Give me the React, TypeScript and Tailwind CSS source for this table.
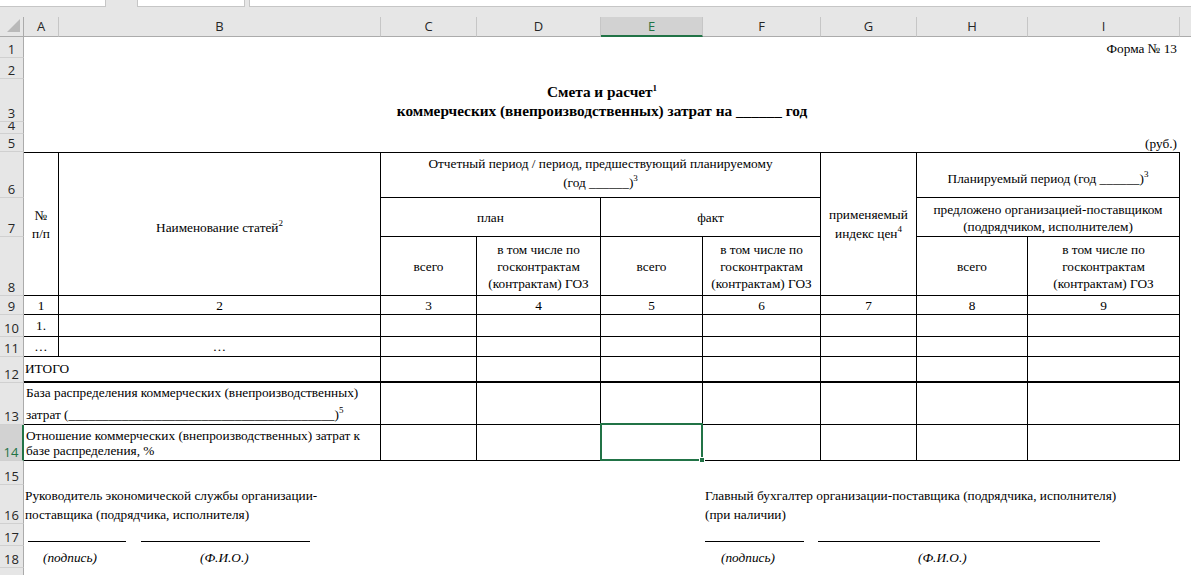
import type { ReactNode } from "react";

const COL = ["", "col-start-1", "col-start-2", "col-start-3", "col-start-4", "col-start-5", "col-start-6", "col-start-7", "col-start-8", "col-start-9", "col-start-10", "col-start-11"];
const ROW = ["", "row-start-1", "row-start-2", "row-start-3", "row-start-4", "row-start-5", "row-start-6", "row-start-7", "row-start-8", "row-start-9", "row-start-10", "row-start-11", "row-start-12", "row-start-13", "row-start-14", "row-start-15", "row-start-16", "row-start-17", "row-start-18", "row-start-19", "row-start-20"];
const CSPAN = ["", "col-span-1", "col-span-2", "col-span-3", "col-span-4", "col-span-5", "col-span-6", "col-span-7", "col-span-8", "col-span-9"];
const RSPAN = ["", "row-span-1", "row-span-2", "row-span-3"];

const LETTERS = ["A", "B", "C", "D", "E", "F", "G", "H", "I"];

type Place = { c: number; r: number; cs?: number; rs?: number; className?: string; children?: ReactNode };

// r is the sheet row (1-based); grid row 1 holds the column letters
function Cell({ c, r, cs = 1, rs = 1, className = "", children }: Place) {
  return (
    <div className={`${COL[c]} ${ROW[r + 1]} ${CSPAN[cs]} ${RSPAN[rs]} ${className}`}>
      {children}
    </div>
  );
}

const Sup = ({ n }: { n: string }) => <sup className="text-[9px] -top-[6px]">{n}</sup>;

const GOZ = (
  <>
    в том числе по
    <br />
    госконтрактам
    <br />
    (контрактам) ГОЗ
  </>
);

type T = { c: number; r: number; cs?: number; rs?: number; node?: ReactNode; align?: string };

const center = "flex flex-col items-center justify-center text-center";

const TABLE: T[] = [
  { c: 2, r: 6, rs: 3, node: <>№<br />п/п</>, align: `${center} leading-[18px] pt-[2px]` },
  { c: 3, r: 6, rs: 3, node: <span>Наименование статей<Sup n="2" /></span>, align: `${center} pt-[6px]` },
  {
    c: 4, r: 6, cs: 4,
    node: <>Отчетный период / период, предшествующий планируемому<br /><span>(год ______)<Sup n="3" /></span></>,
    align: "flex flex-col items-center justify-start text-center leading-[19px] pt-[1px]",
  },
  { c: 8, r: 6, rs: 3, node: <>применяемый<br /><span>индекс цен<Sup n="4" /></span></>, align: `${center} leading-[19px]` },
  { c: 9, r: 6, cs: 2, node: <span>Планируемый период (год ______)<Sup n="3" /></span>, align: "flex flex-col items-center justify-end text-center pb-[10px]" },
  { c: 4, r: 7, cs: 2, node: "план", align: center },
  { c: 6, r: 7, cs: 2, node: "факт", align: center },
  { c: 9, r: 7, cs: 2, node: <>предложено организацией-поставщиком<br />(подрядчиком, исполнителем)</>, align: `${center} leading-[17px] pt-[2px]` },
  { c: 4, r: 8, node: "всего", align: center },
  { c: 5, r: 8, node: GOZ, align: `${center} leading-[17px]` },
  { c: 6, r: 8, node: "всего", align: center },
  { c: 7, r: 8, node: GOZ, align: `${center} leading-[17px]` },
  { c: 9, r: 8, node: "всего", align: center },
  { c: 10, r: 8, node: GOZ, align: `${center} leading-[17px]` },
];

// numbering row 9, data rows 10-11
for (let i = 0; i < 9; i++) TABLE.push({ c: i + 2, r: 9, node: String(i + 1), align: center });
for (let i = 0; i < 9; i++) TABLE.push({ c: i + 2, r: 10, node: i === 0 ? "1." : "", align: center });
for (let i = 0; i < 9; i++) TABLE.push({ c: i + 2, r: 11, node: i < 2 ? "…" : "", align: center });

TABLE.push({ c: 2, r: 12, cs: 2, node: "ИТОГО", align: "flex items-center pl-[1px] pb-[1px]" });
TABLE.push({
  c: 2, r: 13, cs: 2,
  node: (
    <>
      <span>База распределения коммерческих (внепроизводственных)</span>
      <span>затрат (________________________________________)<Sup n="5" /></span>
    </>
  ),
  align: "flex flex-col justify-between pl-[2px] py-[1px]",
});
TABLE.push({
  c: 2, r: 14, cs: 2,
  node: <>Отношение коммерческих (внепроизводственных) затрат к<br />базе распределения, %</>,
  align: "flex flex-col justify-center pl-[2px] leading-[15px] pt-[1px]",
});
for (const r of [12, 13, 14]) for (let c = 4; c <= 10; c++) TABLE.push({ c, r });

export default function App() {
  return (
    <div className="w-[1191px] h-[575px] overflow-hidden bg-white font-[family-name:'Liberation_Serif',serif] text-[13.3px] leading-[17px] text-black">
      {/* formula bar remnants */}
      <div className="h-[17px] bg-[#e6e6e6] flex items-start">
        <div className="w-[106px] h-[7px] bg-white border-r border-b border-[#c6c6c6]" />
        <div className="ml-[31px] w-[108px] h-[7px] bg-white border-x border-b border-[#c6c6c6]" />
        <div className="ml-[4px] flex-1 h-[7px] bg-white border-l border-b border-[#c6c6c6]" />
      </div>

      <div className="grid grid-cols-[24px_35px_322px_96px_124px_102px_118px_96px_111px_152px_1fr] grid-rows-[20px_21px_21px_43px_12px_18px_46px_39px_59px_19px_22px_20px_26px_42px_36px_24px_39px_22px_22px_30px]">
        {/* corner */}
        <div className="col-start-1 row-start-1 bg-[#e6e6e6] border-r border-b border-[#ababab] flex items-end justify-end pr-[2px] pb-[3px]">
          <svg width="14" height="14" viewBox="0 0 14 14">
            <polygon points="13,0 13,13 0,13" fill="#b9b9b9" />
          </svg>
        </div>

        {/* column letters */}
        {LETTERS.map((l, i) => (
          <div
            key={l}
            className={`${COL[i + 2]} row-start-1 flex items-center justify-center font-[family-name:'Open_Sans',sans-serif] text-[13px] border-r border-[#c6c6c6] ${
              l === "E"
                ? "bg-[#d2d2d2] text-[#217346] border-b-2 border-b-[#217346]"
                : "bg-[#e6e6e6] text-[#262626] border-b border-b-[#ababab]"
            }`}
          >
            {l}
          </div>
        ))}
        <div className="col-start-11 row-start-1 bg-[#e6e6e6] border-b border-[#ababab]" />

        {/* row numbers */}
        {Array.from({ length: 19 }, (_, i) => i + 1).map((n) => (
          <div
            key={n}
            className={`col-start-1 ${ROW[n + 1]} flex items-end justify-center font-[family-name:'Open_Sans',sans-serif] text-[13px] leading-[16px] overflow-hidden border-b border-b-[#d0d0d0] ${
              n === 14
                ? "bg-[#d2d2d2] text-[#217346] border-r-2 border-r-[#217346]"
                : "bg-[#e6e6e6] text-[#262626] border-r border-r-[#ababab]"
            }`}
          >
            {n}
          </div>
        ))}

        {/* heading */}
        <Cell c={10} r={1} className="flex items-end justify-end pr-[3px] pb-[1px]">
          Форма № 13
        </Cell>
        <Cell c={2} r={3} cs={9} className="flex flex-col items-center justify-end pb-[2px] font-bold text-[15.3px] leading-[19px]">
          <span>
            Смета и расчет<Sup n="1" />
          </span>
          <span>коммерческих (внепроизводственных) затрат на ______ год</span>
        </Cell>
        <Cell c={10} r={5} className="flex items-end justify-end pr-[3px]">
          (руб.)
        </Cell>

        {/* table */}
        {TABLE.map((t, i) => (
          <Cell
            key={i}
            c={t.c}
            r={t.r}
            cs={t.cs}
            rs={t.rs}
            className={`border-black border-r ${t.r === 12 ? "border-b-2" : "border-b"} ${t.r === 6 ? "border-t" : ""} ${
              t.c === 6 && t.r === 14 ? "relative" : ""
            } ${t.align ?? ""}`}
          >
            {t.node}
            {t.c === 6 && t.r === 14 && (
              <div className="absolute -left-[1px] -right-[1px] -top-[2px] -bottom-[1px] border-2 border-[#217346] z-10">
                <div className="absolute -right-[4px] -bottom-[4px] w-[6px] h-[6px] bg-[#217346] border border-white" />
              </div>
            )}
          </Cell>
        ))}

        {/* signatures */}
        <Cell c={2} r={16} cs={5} className="flex flex-col justify-end pl-[1px] leading-[19px]">
          <span>Руководитель экономической службы организации-</span>
          <span>поставщика (подрядчика, исполнителя)</span>
        </Cell>
        <Cell c={7} r={16} cs={4} className="flex flex-col justify-end pl-[2px] leading-[19px]">
          <span>Главный бухгалтер организации-поставщика (подрядчика, исполнителя)</span>
          <span>(при наличии)</span>
        </Cell>
        <Cell c={2} r={17} cs={5} className="flex items-end pb-[4px]">
          <div className="ml-[4px] w-[98px] border-b border-black" />
          <div className="ml-[15px] w-[169px] border-b border-black" />
        </Cell>
        <Cell c={7} r={17} cs={4} className="flex items-end pb-[4px]">
          <div className="ml-[2px] w-[99px] border-b border-black" />
          <div className="ml-[14px] w-[282px] border-b border-black" />
        </Cell>
        <Cell c={2} r={18} cs={5} className="flex items-center italic">
          <div className="w-[176px] pl-[19px]">(подпись)</div>
          <div>(Ф.И.О.)</div>
        </Cell>
        <Cell c={7} r={18} cs={4} className="flex items-center italic">
          <div className="w-[215px] pl-[18px]">(подпись)</div>
          <div>(Ф.И.О.)</div>
        </Cell>
      </div>
    </div>
  );
}
